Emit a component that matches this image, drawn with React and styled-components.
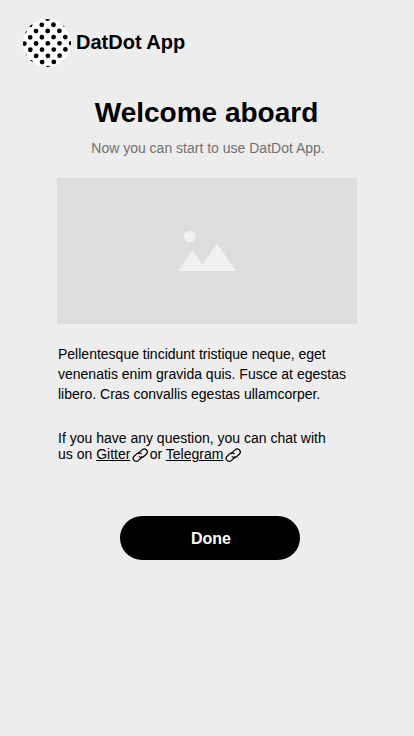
import React from "react";
import styled, { createGlobalStyle } from "styled-components";

const GlobalStyle = createGlobalStyle`
  * { box-sizing: border-box; }
  body {
    margin: 0;
    background: #ededed;
    color: #000;
    font-family: "Liberation Sans", Arial, sans-serif;
  }
`;

const Screen = styled.div`
  min-height: 736px;
  background: #ededed;
`;

const Header = styled.header`
  display: flex;
  align-items: center;
  gap: 5px;
  height: 86px;
  padding-left: 23px;
`;

const Brand = styled.span`
  padding-bottom: 2px;
  font-size: 20px;
  line-height: 24px;
  font-weight: 700;
`;

const Main = styled.main`
  display: flex;
  flex-direction: column;
  width: 300px;
  margin: 0 auto;
`;

const Title = styled.h1`
  margin: 10px 0 0 -1px;
  font-size: 28px;
  line-height: 34px;
  text-align: center;
`;

const Subtitle = styled.p`
  margin: 10px 0 0 2px;
  font-size: 14px;
  line-height: 16px;
  text-align: center;
  color: #707070;
`;

const Picture = styled.div`
  display: flex;
  height: 146px;
  margin-top: 22px;
  padding: 52px 0 0 120px;
  background: #ddd;
`;

const Paragraph = styled.p`
  margin: ${({ $top }) => $top}px 0 0 1px;
  font-size: 14px;
  line-height: ${({ $leading }) => $leading}px;
  white-space: nowrap;
`;

const Link = styled.a`
  color: inherit;
  text-decoration: none;
`;

const LinkLabel = styled.span`
  text-decoration: underline;
`;

const LinkSvg = styled.svg`
  width: 16px;
  height: 16px;
  margin: 0 1.7px 0 1.6px;
  vertical-align: -4px;
`;

const DoneButton = styled.button`
  width: 180px;
  height: 44px;
  margin: 53px 0 0 63.4px;
  padding: 1px 0 0 1px;
  border: 0;
  border-radius: 22px;
  background: #000;
  color: #fff;
  font-family: inherit;
  font-size: 16px;
  line-height: 18px;
  font-weight: 700;
`;

const rows = [-4, -3, -2, -1, 0, 1, 2, 3, 4];
const columns = [-3, -2, -1, 0, 1, 2];

function Logo() {
  return (
    <svg width="48" height="48" viewBox="0 0 48 48" aria-hidden="true">
      <defs>
        <clipPath id="disc"><circle cx="24" cy="24" r="24" /></clipPath>
      </defs>
      <circle cx="24" cy="24" r="24" fill="#fff" />
      <g clipPath="url(#disc)">
        <g transform="rotate(-0.5 24 24)">
          {rows.flatMap((row) =>
            columns.map((col) => (
              <circle
                key={`${row}:${col}`}
                cx={24.8 + col * 11.7 + (row % 2 ? 5.85 : 0)}
                cy={24.4 + row * 6.2}
                r="2.4"
              />
            ))
          )}
        </g>
      </g>
    </svg>
  );
}

function LinkIcon() {
  return (
    <LinkSvg viewBox="0 0 16 16" fill="none" stroke="#000" strokeWidth="1.2" aria-hidden="true">
      <g transform="translate(0.2 0.2) rotate(-43 8 8)">
        <path d="M8.6 9.9A3 3 0 0 1 6.7 10.6H2.9a3 3 0 0 1 0-6h3.8a3 3 0 0 1 3 3.5" />
        <path d="M7.4 6.1a3 3 0 0 1 1.9-.7h3.8a3 3 0 0 1 0 6H9.3a3 3 0 0 1-3-3.5" />
      </g>
    </LinkSvg>
  );
}

export default function App() {
  return (
    <Screen>
      <GlobalStyle />
      <Header>
        <Logo />
        <Brand>DatDot App</Brand>
      </Header>
      <Main>
        <Title>Welcome aboard</Title>
        <Subtitle>Now you can start to use DatDot App.</Subtitle>
        <Picture>
          <svg width="60" height="42" viewBox="0 0 60 42" fill="#f1f1f1" aria-hidden="true">
            <circle cx="12.8" cy="6.6" r="5.9" />
            <path d="M1 41 15.5 20.5 25.5 34.5 40 13.5 59.3 41Z" />
          </svg>
        </Picture>
        <Paragraph $top={20} $leading={20}>
          Pellentesque tincidunt tristique neque, eget
          <br />
          venenatis enim gravida quis. Fusce at egestas
          <br />
          libero. Cras convallis egestas ullamcorper.
        </Paragraph>
        <Paragraph $top={26} $leading={16}>
          If you have any question, you can chat with
          <br />
          us on <Link href="#gitter"><LinkLabel>Gitter</LinkLabel><LinkIcon /></Link>
          or <Link href="#telegram"><LinkLabel>Telegram</LinkLabel><LinkIcon /></Link>
        </Paragraph>
        <DoneButton type="button">Done</DoneButton>
      </Main>
    </Screen>
  );
}
